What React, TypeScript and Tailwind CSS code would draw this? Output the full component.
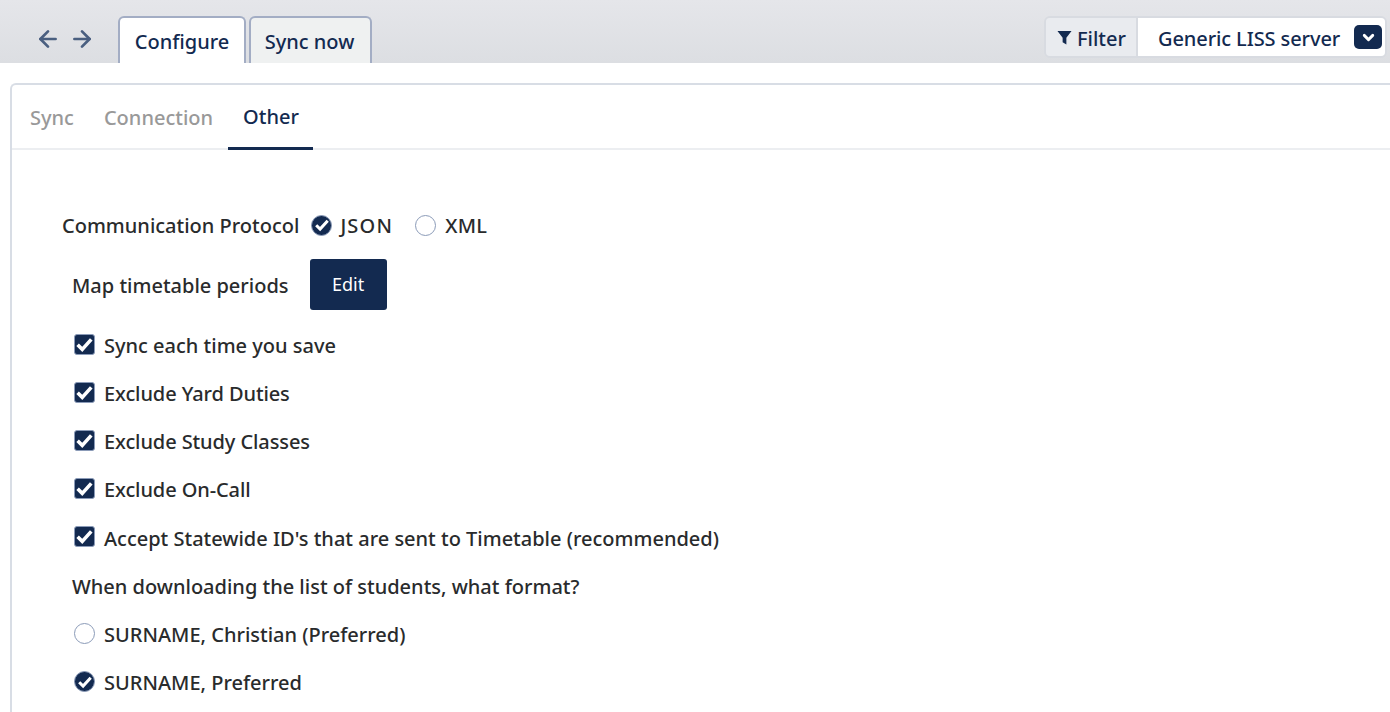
import { ArrowLeft, ArrowRight, ChevronDown } from "lucide-react";

const font = { fontFamily: '"Noto Sans", sans-serif' };

const CheckMark = ({ size }: { size: number }) => (
  <svg width={size} height={size} viewBox="0 0 16 16" fill="none" className="shrink-0">
    <path d="M2.2 8.2l3.9 3.9 7.6-8.4" stroke="#fff" strokeWidth="3" />
  </svg>
);

const Radio = ({ checked }: { checked?: boolean }) =>
  checked ? (
    <div className="w-[21px] h-[21px] rounded-full bg-[#132a50] border-[1.5px] border-[#8b9bb8] flex items-center justify-center shrink-0">
      <CheckMark size={16} />
    </div>
  ) : (
    <div className="w-[21px] h-[21px] rounded-full bg-white border-[1.5px] border-[#8b9bb8] shrink-0" />
  );

const Checkbox = () => (
  <div className="w-[21px] h-[21px] -mt-[2px] rounded-[3px] bg-[#132a50] border-[1.5px] border-[#8b9bb8] flex items-center justify-center shrink-0">
    <CheckMark size={19} />
  </div>
);

// text sits 1px lower than the box centre
const Label = ({ children, className }: { children: string; className?: string }) => (
  <span className={`pt-[2px] ${className ?? ""}`}>{children}</span>
);

const checks = [
  { label: "Sync each time you save", row: "h-[48px]", text: "" },
  { label: "Exclude Yard Duties", row: "h-[48px]", text: "tracking-[-0.1px]" },
  { label: "Exclude Study Classes", row: "h-[48px]", text: "tracking-[-0.1px]" },
  { label: "Exclude On-Call", row: "h-[48px]", text: "tracking-[-0.1px]" },
  { label: "Accept Statewide ID's that are sent to Timetable (recommended)", row: "h-[49px]", text: "" },
];

export default function App() {
  return (
    <div className="w-[1390px] h-[712px] overflow-hidden bg-white text-[20px] text-[#292b2c]" style={font}>
      {/* Top bar */}
      <div className="h-[63px] bg-gradient-to-b from-[#e5e6ea] to-[#dcdee2] flex justify-between">
        <div className="flex items-end">
          <div className="flex items-center gap-[8px] pl-[35px] w-[118px] h-[47px] pb-[1px] text-[#4a5f80]">
            <ArrowLeft size={26} strokeWidth={2.5} />
            <ArrowRight size={26} strokeWidth={2.5} />
          </div>
          <div className="h-[47px] w-[128px] pt-[2px] bg-white border-2 border-b-0 border-[#a3adc4] rounded-t-[6px] flex items-center justify-center text-[#132a50] font-medium">
            Configure
          </div>
          <div className="h-[47px] w-[123px] pt-[2px] pr-[2px] ml-[3px] bg-[#eff1f1] border-2 border-b-0 border-[#a3adc4] rounded-t-[6px] flex items-center justify-center text-[#132a50] font-medium">
            Sync now
          </div>
        </div>
        <div className="mt-[16px] mr-[3px] h-[42px] w-[343px] flex border-2 border-[#d8dbe1] rounded-[6px] overflow-hidden text-[#132a50] font-medium">
          <div className="w-[92px] bg-[#e9ebef] border-r-2 border-[#d8dbe1] flex items-center pl-[11px] gap-[5px]">
            <svg width="15" height="15" viewBox="0 0 16 16" fill="#132a50">
              <path d="M0.5 1h15L10 8.2V15.5L6 13V8.2z" />
            </svg>
            <span className="pt-[3px]">Filter</span>
          </div>
          <div className="flex-1 bg-white flex items-center justify-between pl-[20px] pr-[3px]">
            <span className="pt-[3px] tracking-[-0.1px]">Generic LISS server</span>
            <span className="w-[28px] h-[24px] rounded-[5px] bg-[#132a50] flex items-center justify-center text-white">
              <ChevronDown size={17} strokeWidth={4} />
            </span>
          </div>
        </div>
      </div>

      {/* Card */}
      <div className="mt-[20px] ml-[10px] h-[640px] border-t-2 border-l-2 border-[#d8dde5] rounded-tl-[6px]">
        <div className="h-[65px] flex items-stretch border-b-2 border-[#eceef1] font-medium text-[#999999] pl-[3px]">
          <div className="px-[15px] pt-[2px] flex items-center">Sync</div>
          <div className="px-[15px] pt-[2px] flex items-center">Connection</div>
          <div className="pl-[15px] pr-[14px] pt-[2px] -mb-[2px] flex items-center border-b-[3px] border-[#132a50] text-[#132a50]">Other</div>
        </div>

        <div className="pt-[51px] pl-[50px] font-medium">
          <div className="h-[48px] flex items-center">
            <Label>Communication Protocol</Label>
            <div className="ml-[12px]"><Radio checked /></div>
            <Label className="ml-[8px] tracking-[1.2px]">JSON</Label>
            <div className="ml-[22px]"><Radio /></div>
            <Label className="ml-[9px] tracking-[0.3px]">XML</Label>
          </div>
          <div className="h-[72px] flex items-center pl-[10px]">
            <Label>Map timetable periods</Label>
            <button className="ml-[21px] -mt-[2px] w-[77px] h-[51px] bg-[#132a50] text-white rounded-[3px] text-[18px] font-normal">Edit</button>
          </div>
          {checks.map((c) => (
            <div key={c.label} className={`${c.row} flex items-center gap-[9px] pl-[12px]`}>
              <Checkbox />
              <Label className={c.text}>{c.label}</Label>
            </div>
          ))}
          <div className="h-[48px] flex items-center pl-[10px]">
            <Label>When downloading the list of students, what format?</Label>
          </div>
          <div className="h-[48px] flex items-center gap-[9px] pl-[12px]">
            <div className="-mt-[2px]"><Radio /></div>
            <Label>SURNAME, Christian (Preferred)</Label>
          </div>
          <div className="h-[48px] flex items-center gap-[9px] pl-[12px]">
            <div className="-mt-[1px]"><Radio checked /></div>
            <Label>SURNAME, Preferred</Label>
          </div>
        </div>
      </div>
    </div>
  );
}
